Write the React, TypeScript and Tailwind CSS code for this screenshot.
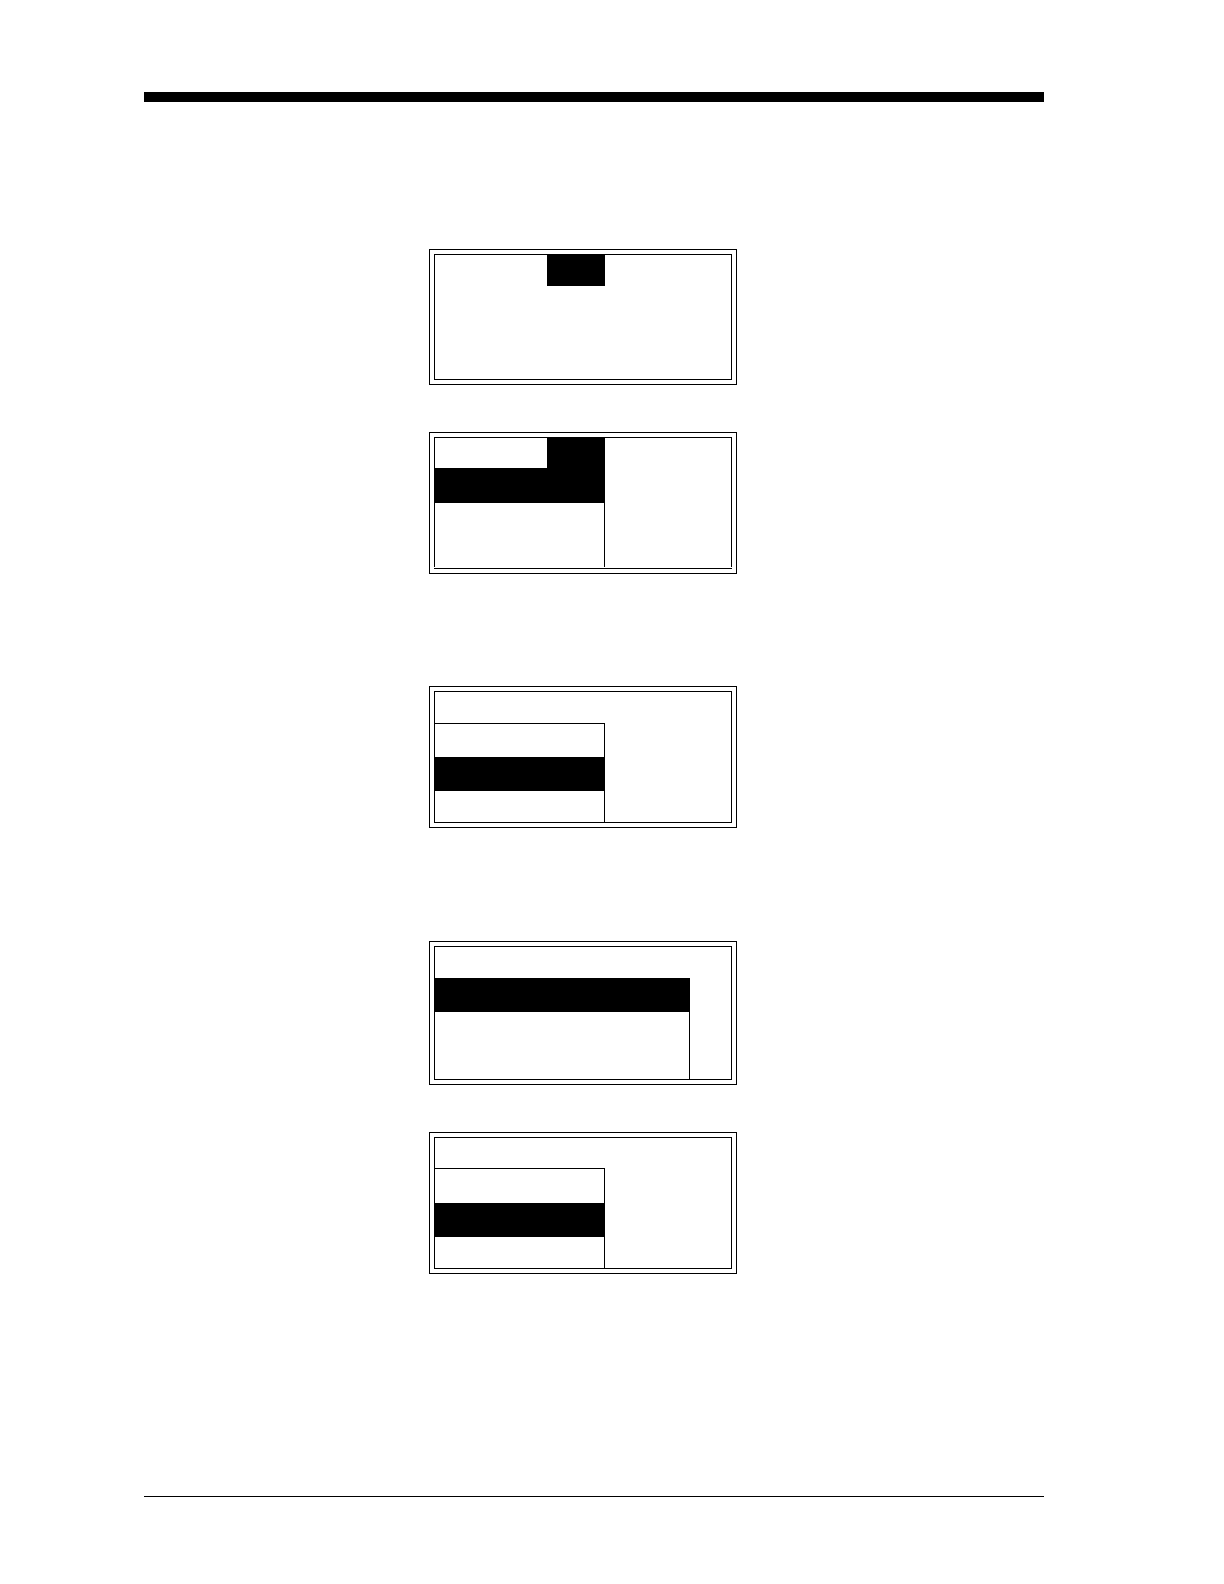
import type { ReactNode } from "react";
import clsx from "clsx";

type ScreenProps = {
  className?: string;
  children: ReactNode;
};

// Double-line frame of the instrument display
function Screen({ className, children }: ScreenProps) {
  return (
    <section
      className={clsx("w-[308px] max-w-full border border-black p-1", className)}
    >
      {children}
    </section>
  );
}

// Menu bar with one highlighted tab
function MenuBar({ className }: { className: string }) {
  return (
    <div className={clsx("flex", className)}>
      <div className="ml-28 w-[58px] bg-black" />
    </div>
  );
}

// Drop-down with its middle item selected
function DropDown({ firstRow }: { firstRow: string }) {
  return (
    <div className="w-[170px] border-t border-r border-black">
      <div className={firstRow} />
      <div className="h-[34px] bg-black" />
      <div className="h-[31px]" />
    </div>
  );
}

export default function App() {
  return (
    <div className="min-h-screen bg-white pt-[92px] pr-[180px] pb-[87px] pl-36">
      <header className="h-[10px] bg-black" />

      <main className="flex flex-col pt-[147px] pb-[222px] pl-[285px]">
        <Screen>
          <div className="h-[126px] border border-black">
            <MenuBar className="h-[31px]" />
          </div>
        </Screen>

        <Screen className="mt-[47px]">
          <div className="border-x border-t border-black">
            <MenuBar className="h-[30px]" />
            <div className="h-[35px] w-[170px] bg-black" />
            <div className="h-16 w-[170px] border-r border-black" />
          </div>
          <div className="mt-px h-px bg-black" />
        </Screen>

        <Screen className="mt-28">
          <div className="border border-black pt-[31px]">
            <DropDown firstRow="h-[33px]" />
          </div>
        </Screen>

        <Screen className="mt-[113px]">
          <div className="border border-black pt-[31px]">
            <div className="h-[34px] w-[255px] bg-black" />
            <div className="h-[67px] w-[255px] border-r border-black" />
          </div>
        </Screen>

        <Screen className="mt-[47px]">
          <div className="border border-black pt-[30px]">
            <DropDown firstRow="h-[34px]" />
          </div>
        </Screen>
      </main>

      <footer className="border-t border-black" />
    </div>
  );
}
